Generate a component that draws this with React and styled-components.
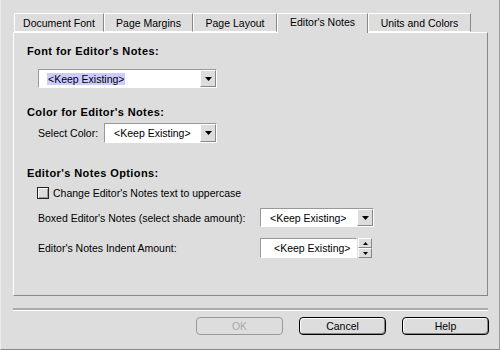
import React from 'react'
import styled, { createGlobalStyle } from 'styled-components'

const GlobalStyle = createGlobalStyle`
  html, body {
    margin: 0;
    padding: 0;
    background: #dddddd;
  }
  body {
    font-family: "Liberation Sans", Arial, sans-serif;
    font-size: 10.5px;
    color: #000;
    -webkit-font-smoothing: none;
  }
`

const tabs = [
  { label: 'Document Font', width: 90 },
  { label: 'Page Margins', width: 89 },
  { label: 'Page Layout', width: 84 },
  { label: "Editor's Notes", width: 91, active: true },
  { label: 'Units and Colors', width: 103 },
]

const App = () => {
  return (
    <Window>
      <GlobalStyle />
      <TabBar>
        {tabs.map(tab => (
          <Tab key={tab.label} $width={tab.width} $active={tab.active}>
            {tab.label}
          </Tab>
        ))}
      </TabBar>
      <Panel>
        <Heading $top={12}>Font for Editor's Notes:</Heading>
        <Indent $top={12}>
          <Popup $width={179} $height={19}>
            <PopupText $pad={8}>
              <Selected>&lt;Keep Existing&gt;</Selected>
            </PopupText>
            <Arrow />
          </Popup>
        </Indent>

        <Heading $top={18}>Color for Editor's Notes:</Heading>
        <Row $top={5}>
          <Label>Select Color:</Label>
          <Popup $width={113} $height={20}>
            <PopupText $pad={9}>&lt;Keep Existing&gt;</PopupText>
            <Arrow />
          </Popup>
        </Row>

        <Heading $top={24}>Editor's Notes Options:</Heading>
        <CheckRow $top={8}>
          <Checkbox />
          <Label>Change Editor's Notes text to uppercase</Label>
        </CheckRow>
        <OptionRow $top={9}>
          <Label>Boxed Editor's Notes (select shade amount):</Label>
          <Popup $width={114} $height={19}>
            <PopupText $pad={9}>&lt;Keep Existing&gt;</PopupText>
            <Arrow />
          </Popup>
        </OptionRow>
        <OptionRow $top={11}>
          <Label>Editor's Notes Indent Amount:</Label>
          <SpinGroup>
            <SpinField>&lt;Keep Existing&gt;</SpinField>
            <SpinButtons>
              <SpinButton>
                <Tri $up />
              </SpinButton>
              <SpinButton>
                <Tri />
              </SpinButton>
            </SpinButtons>
          </SpinGroup>
        </OptionRow>
      </Panel>
      <Separator />
      <ButtonRow>
        <Button disabled>OK</Button>
        <Button>Cancel</Button>
        <Button>Help</Button>
      </ButtonRow>
    </Window>
  )
}

export default App

const Window = styled.div`
  box-sizing: border-box;
  width: 500px;
  height: 350px;
  padding: 13px 0 0 12px;
  background: #dddddd;
  border-left: 1px solid #ececec;
  border-right: 1px solid #999;
  border-bottom: 1px solid #888;
  overflow: hidden;
`

const TabBar = styled.div`
  display: flex;
  align-items: flex-end;
  height: 19px;
  margin-left: 1px;
  position: relative;
  z-index: 1;
`

const Tab = styled.div`
  box-sizing: border-box;
  width: ${p => p.$width}px;
  height: ${p => (p.$active ? 20 : 19)}px;
  margin-bottom: ${p => (p.$active ? -1 : 0)}px;
  display: flex;
  align-items: center;
  justify-content: center;
  padding-bottom: ${p => (p.$active ? 3 : 0)}px;
  background: #dddddd;
  border-top: 1px solid #fff;
  border-left: 1px solid #fff;
  border-right: 1px solid #888;
  border-bottom: ${p => (p.$active ? 'none' : '1px solid #fff')};
  white-space: nowrap;
`

const Panel = styled.div`
  box-sizing: border-box;
  width: 475px;
  height: 264px;
  border-top: 1px solid #fff;
  border-left: 1px solid #fff;
  border-right: 1px solid #888;
  border-bottom: 1px solid #888;
  padding-left: 13px;
  display: flex;
  flex-direction: column;
`

const Heading = styled.div`
  margin-top: ${p => p.$top}px;
  height: 12px;
  line-height: 12px;
  font-weight: bold;
  font-size: 11px;
  letter-spacing: 0.4px;
`

const Indent = styled.div`
  margin-top: ${p => p.$top}px;
  padding-left: 11px;
  display: flex;
`

const Row = styled.div`
  margin-top: ${p => p.$top}px;
  padding-left: 11px;
  display: flex;
  align-items: center;
  gap: 6px;
`

const CheckRow = styled.div`
  margin-top: ${p => p.$top}px;
  padding-left: 10px;
  display: flex;
  align-items: center;
  gap: 4px;
  height: 12px;
`

const OptionRow = styled.div`
  margin-top: ${p => p.$top}px;
  padding-left: 11px;
  display: grid;
  grid-template-columns: 222px auto;
  align-items: center;
`

const Label = styled.span`
  white-space: nowrap;
  line-height: 12px;
`

const Popup = styled.div`
  box-sizing: border-box;
  width: ${p => p.$width}px;
  height: ${p => p.$height}px;
  display: flex;
  background: #fff;
  border-top: 1px solid #999;
  border-left: 1px solid #999;
  border-right: 1px solid #fff;
  border-bottom: 1px solid #fff;
`

const PopupText = styled.div`
  flex: 1;
  display: flex;
  align-items: center;
  padding-left: ${p => p.$pad}px;
  white-space: nowrap;
`

const Selected = styled.span`
  background: #ccccff;
  padding: 0 1px;
  line-height: 12px;
`

const ArrowBox = styled.div`
  box-sizing: border-box;
  width: 16px;
  display: flex;
  align-items: center;
  justify-content: center;
  background: #dddddd;
  border-top: 1px solid #fff;
  border-left: 1px solid #fff;
  border-right: 1px solid #888;
  border-bottom: 1px solid #888;
`

const Arrow = () => (
  <ArrowBox>
    <svg width="7" height="4" viewBox="0 0 7 4">
      <path d="M0 0h7L3.5 4z" fill="#000" />
    </svg>
  </ArrowBox>
)

const Checkbox = styled.div`
  box-sizing: border-box;
  width: 12px;
  height: 12px;
  border: 1px solid #222;
  background: #dddddd;
  box-shadow: inset 1px 1px 0 #fff, inset -1px -1px 0 #999;
`

const SpinGroup = styled.div`
  display: flex;
  align-items: center;
  gap: 1px;
`

const SpinField = styled.div`
  box-sizing: border-box;
  width: 97px;
  height: 20px;
  display: flex;
  align-items: center;
  padding-left: 13px;
  background: #fff;
  border-top: 1px solid #999;
  border-left: 1px solid #999;
  border-right: 1px solid #fff;
  border-bottom: 1px solid #fff;
  white-space: nowrap;
`

const SpinButtons = styled.div`
  display: flex;
  flex-direction: column;
`

const SpinButton = styled.div`
  box-sizing: border-box;
  width: 14px;
  height: 10px;
  display: flex;
  align-items: center;
  justify-content: center;
  background: #dddddd;
  border-top: 1px solid #fff;
  border-left: 1px solid #fff;
  border-right: 1px solid #888;
  border-bottom: 1px solid #888;
`

const Tri = ({ $up }) => (
  <svg width="5" height="3" viewBox="0 0 5 3">
    <path d={$up ? 'M2.5 0L5 3H0z' : 'M0 0h5L2.5 3z'} fill="#000" />
  </svg>
)

const Separator = styled.div`
  width: 475px;
  height: 2px;
  margin-top: 12px;
  background: #aaaaaa;
  border-bottom: 1px solid #fff;
`

const ButtonRow = styled.div`
  width: 476px;
  display: flex;
  justify-content: flex-end;
  gap: 16px;
  margin-top: 6px;
`

const Button = styled.button`
  box-sizing: border-box;
  width: 87px;
  height: 18px;
  margin: 0;
  padding: 0;
  font-family: inherit;
  font-size: 10.5px;
  color: ${p => (p.disabled ? '#aaaaaa' : '#000')};
  background: #dddddd;
  border: 1px solid ${p => (p.disabled ? '#999' : '#000')};
  border-radius: 4px;
  box-shadow: ${p =>
    p.disabled
      ? 'none'
      : 'inset 1px 1px 0 #fff, inset -1px -1px 0 #888'};
  appearance: none;
`
